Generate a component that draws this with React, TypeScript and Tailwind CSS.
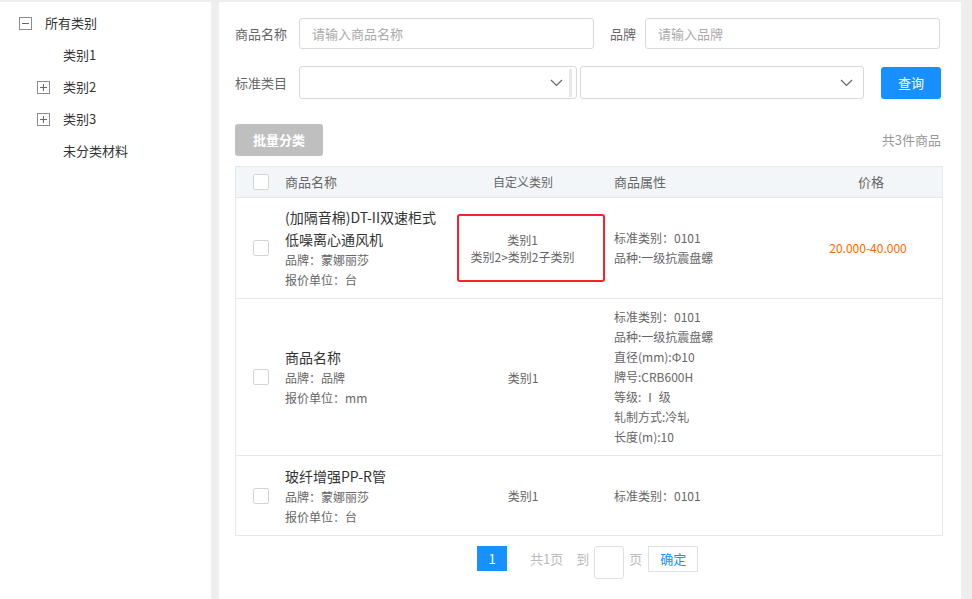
import React from 'react';

const FONT = { fontFamily: '"Noto Sans CJK SC", "Liberation Sans", sans-serif' };

const TreeBox = ({ plus }: { plus?: boolean }) => (
  <svg width="13" height="13" viewBox="0 0 13 13" className="shrink-0">
    <rect x="0.5" y="0.5" width="12" height="12" fill="white" stroke="#8c8c8c" />
    <line x1="3" y1="6.5" x2="10" y2="6.5" stroke="#666" />
    {plus && <line x1="6.5" y1="3" x2="6.5" y2="10" stroke="#666" />}
  </svg>
);

const Chevron = () => (
  <svg width="13" height="8" viewBox="0 0 13 8">
    <polyline points="1,1 6.5,6.5 12,1" fill="none" stroke="#666" strokeWidth="1.2" />
  </svg>
);

const Checkbox = () => (
  <div className="w-[16px] h-[16px] border border-[#d4d4d4] rounded-[2px] bg-white" />
);

const products = [
  {
    name: ['(加隔音棉)DT-II双速柜式', '低噪离心通风机'],
    brand: '蒙娜丽莎',
    unit: '台',
    cats: ['类别1', '类别2>类别2子类别'],
    attrs: ['标准类别：0101', '品种:一级抗震盘螺'],
    price: '20.000-40.000',
    h: 'h-[101px]',
    mark: true,
  },
  {
    name: ['商品名称'],
    brand: '品牌',
    unit: 'mm',
    cats: ['类别1'],
    attrs: [
      '标准类别：0101',
      '品种:一级抗震盘螺',
      '直径(mm):Φ10',
      '牌号:CRB600H',
      '等级: Ⅰ 级',
      '轧制方式:冷轧',
      '长度(m):10',
    ],
    price: '',
    h: 'h-[157px]',
    mark: false,
  },
  {
    name: ['玻纤增强PP-R管'],
    brand: '蒙娜丽莎',
    unit: '台',
    cats: ['类别1'],
    attrs: ['标准类别：0101'],
    price: '',
    h: 'h-[79px]',
    mark: false,
  },
];

const tree = [
  { label: '类别1', plus: false },
  { label: '类别2', plus: true },
  { label: '类别3', plus: true },
  { label: '未分类材料', plus: false },
];

export default function App() {
  return (
    <div style={FONT} className="w-[972px] h-[599px] bg-[#eeeeee] flex gap-[8px] pt-[2px] overflow-hidden">
      {/* sidebar */}
      <div className="w-[211px] bg-white pt-[5px] text-[13px] text-[#333]">
        <div className="flex items-center h-[32px] pl-[19px] gap-[13px]">
          <TreeBox />
          <span>所有类别</span>
        </div>
        {tree.map((t) => (
          <div key={t.label} className="flex items-center h-[32px] pl-[37px] gap-[13px]">
            {t.plus ? <TreeBox plus /> : <span className="w-[13px]" />}
            <span>{t.label}</span>
          </div>
        ))}
      </div>

      {/* main */}
      <div className="w-[742px] bg-white pl-[16px] pr-[18px] pt-[16px] text-[13px]">
        <div className="flex items-center h-[31px]">
          <span className="w-[64px] text-[#666]">商品名称</span>
          <div className="w-[295px] h-[31px] border border-[#d9d9d9] rounded-[3px] flex items-center px-[12px] text-[#aaa]">
            请输入商品名称
          </div>
          <span className="ml-[16px] w-[35px] text-[#666]">品牌</span>
          <div className="w-[295px] h-[31px] border border-[#d9d9d9] rounded-[3px] flex items-center px-[12px] text-[#aaa]">
            请输入品牌
          </div>
        </div>

        <div className="flex items-center h-[33px] mt-[17px]">
          <span className="w-[64px] text-[#666]">标准类目</span>
          <div className="w-[278px] h-[33px] border border-[#d9d9d9] rounded-[3px] flex items-center justify-end pr-[4px]">
            <Chevron />
            <div className="ml-[6px] w-[3px] h-[28px] bg-[#e8e8e8]" />
          </div>
          <div className="ml-[3px] w-[284px] h-[33px] border border-[#d9d9d9] rounded-[3px] flex items-center justify-end pr-[10px]">
            <Chevron />
          </div>
          <button className="ml-[17px] w-[60px] h-[32px] bg-[#1890ff] rounded-[3px] text-white text-[13px]">
            查询
          </button>
        </div>

        <div className="flex items-center justify-between mt-[25px] h-[32px] pr-[2px]">
          <button className="w-[88px] h-[32px] bg-[#bfbfbf] rounded-[3px] text-white text-[13px] font-bold">
            批量分类
          </button>
          <span className="text-[#999]">共3件商品</span>
        </div>

        {/* table */}
        <div className="mt-[10px] border border-[#e8e8e8] text-[12px]">
          <div className="flex items-center h-[31px] bg-[#f3f6f9] border-b border-[#e8e8e8] text-[#666]">
            <div className="w-[48px] flex justify-center pl-[1px]">
              <Checkbox />
            </div>
            <div className="w-[172px] text-[13px] pl-[1px]">商品名称</div>
            <div className="w-[144px] text-center text-[12px] pr-[10px]">自定义类别</div>
            <div className="w-[200px] pl-[14px] text-[13px]">商品属性</div>
            <div className="flex-1 text-center text-[13px]">价格</div>
          </div>
          {products.map((p, i) => (
            <div
              key={i}
              className={`flex items-center ${p.h} ${i < products.length - 1 ? 'border-b border-[#e8e8e8]' : ''}`}
            >
              <div className="w-[48px] flex justify-center pl-[1px]">
                <Checkbox />
              </div>
              <div className="w-[172px] pl-[1px]">
                {p.name.map((n) => (
                  <div key={n} className="text-[14px] leading-[22px] text-[#333]">{n}</div>
                ))}
                <div className="leading-[20px] text-[#666]">品牌：{p.brand}</div>
                <div className="leading-[20px] text-[#666]">报价单位：{p.unit}</div>
              </div>
              <div className="w-[144px] flex justify-center">
                <div
                  className={`shrink-0 flex flex-col items-center justify-center text-[#666] leading-[17px] ${
                    p.mark
                      ? 'w-[148px] h-[68px] ml-[5px] pr-[16px] border-2 border-[#f5222d] rounded-[3px]'
                      : 'pr-[10px]'
                  }`}
                >
                  {p.cats.map((c) => (
                    <div key={c}>{c}</div>
                  ))}
                </div>
              </div>
              <div className="w-[200px] pl-[14px] text-[#666]">
                {p.attrs.map((a) => (
                  <div key={a} className="leading-[20px]">{a}</div>
                ))}
              </div>
              <div className="flex-1 text-center text-[#ff6a00] pr-[6px]">{p.price}</div>
            </div>
          ))}
        </div>

        {/* pagination */}
        <div className="flex items-start mt-[10px] text-[13px] pl-[242px]">
          <div className="w-[30px] h-[25px] bg-[#1890ff] text-white flex items-center justify-center">1</div>
          <span className="ml-[23px] h-[25px] flex items-center text-[#bbb]">共1页</span>
          <span className="ml-[13px] h-[25px] flex items-center text-[#bbb]">到</span>
          <div className="ml-[5px] w-[30px] h-[33px] border border-[#e0e0e0] rounded-[3px]" />
          <span className="ml-[5px] h-[25px] flex items-center text-[#bbb]">页</span>
          <div className="ml-[6px] w-[50px] h-[26px] border border-[#e0e0e0] flex items-center justify-center text-[#1890ff]">
            确定
          </div>
        </div>
      </div>
    </div>
  );
}
